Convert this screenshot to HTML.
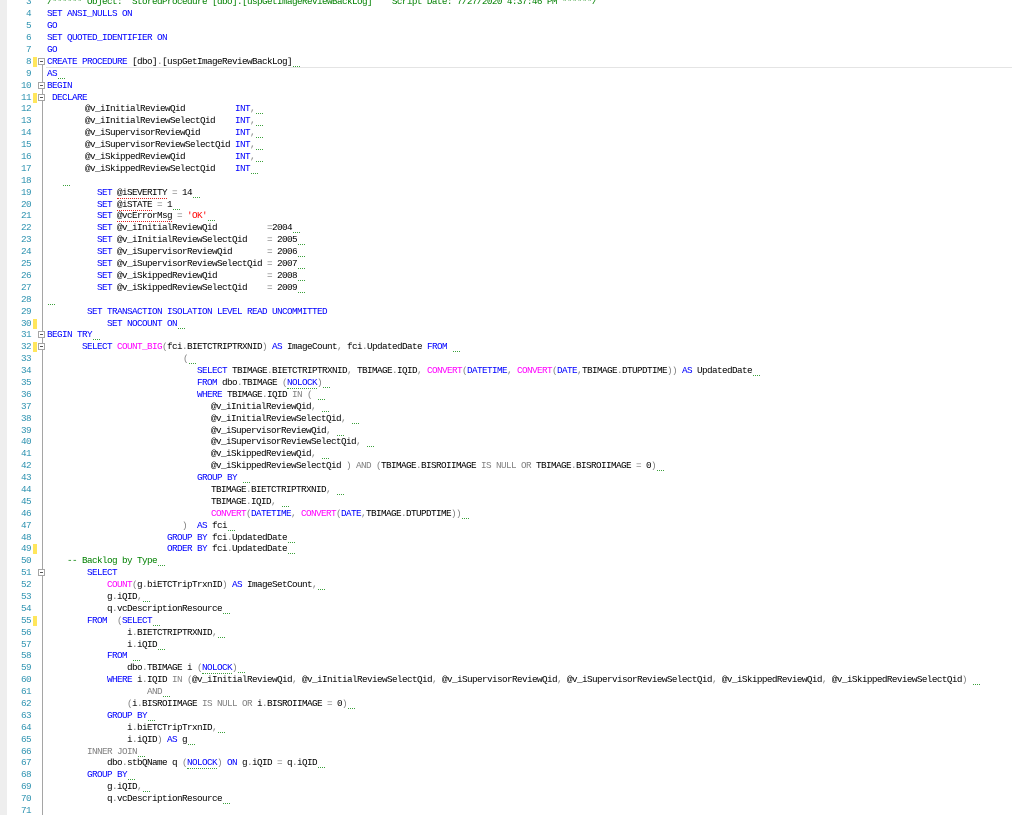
<!DOCTYPE html>
<html><head><meta charset="utf-8"><style>
html,body{margin:0;padding:0;background:#fff;width:1012px;height:815px;overflow:hidden;}
body{position:relative;font-family:"Liberation Mono",monospace;font-size:9.3px;}
#strip{position:absolute;left:0;top:0;width:7px;height:815px;background:#eeeeee;}
#fold{position:absolute;left:42px;top:60px;width:1px;height:755px;background:#a5a5a5;}
#code{position:absolute;left:0;top:-3.55px;width:1012px;}
.l{position:relative;height:11.9px;line-height:11.9px;white-space:pre;letter-spacing:-0.58px;}
.n{position:absolute;left:0;width:31px;text-align:right;color:#2b91af;}
.t{position:absolute;top:0;color:#000;}
.y{position:absolute;left:33px;top:1px;width:4px;height:10px;background:#ffe65c;}
.b{position:absolute;left:38px;top:2px;width:7px;height:7px;border:1px solid #a5a5a5;background:#fff;box-sizing:border-box;}
.b:after{content:"";position:absolute;left:1px;top:2px;width:3px;height:1px;background:#555;}
.k{color:#0000ff}.f{color:#ff00ff}.g{color:#808080}.s{color:#ff0000}.c{color:#008000}
.w{display:inline-block;width:7px;height:1px;margin-left:1px;border-bottom:1px dotted #3aa03a;vertical-align:-3px;}
.k.w2,.w2{border-bottom:1px dotted #3aa03a;}
.r{border-bottom:1px dotted #e02020;}
.hl{position:absolute;left:46px;top:-1px;width:966px;height:0;border-top:1px solid #e4e4e4;}
</style></head><body>
<div id="strip"></div>
<div id="fold"></div>
<div id="code">
<div class="l"><span class="n">3</span><span class="t c" style="left:47px">/****** Object:  StoredProcedure [dbo].[uspGetImageReviewBackLog]    Script Date: 7/27/2020 4:37:46 PM ******/</span></div>
<div class="l"><span class="n">4</span><span class="t k" style="left:47px">SET ANSI_NULLS ON</span></div>
<div class="l"><span class="n">5</span><span class="t k" style="left:47px">GO</span></div>
<div class="l"><span class="n">6</span><span class="t k" style="left:47px">SET QUOTED_IDENTIFIER ON</span></div>
<div class="l"><span class="n">7</span><span class="t k" style="left:47px">GO</span></div>
<div class="l"><span class="n">8</span><span class="y"></span><span class="b"></span><span class="t" style="left:47px"><span class="k">CREATE PROCEDURE</span> <span class="r">[dbo]</span><span class="g">.</span><span class="r">[uspGetImageReviewBackLog]</span><span class="w"></span></span></div>
<div class="l"><span class="n">9</span><span class="hl"></span><span class="t" style="left:47px"><span class="k">AS</span><span class="w"></span></span></div>
<div class="l"><span class="n">10</span><span class="b"></span><span class="t k" style="left:47px">BEGIN</span></div>
<div class="l"><span class="n">11</span><span class="y"></span><span class="b"></span><span class="t k" style="left:52px">DECLARE</span></div>
<div class="l"><span class="n">12</span><span class="t" style="left:85px">@v_iInitialReviewQid          <span class="k">INT</span><span class="g">,</span><span class="w"></span></span></div>
<div class="l"><span class="n">13</span><span class="t" style="left:85px">@v_iInitialReviewSelectQid    <span class="k">INT</span><span class="g">,</span><span class="w"></span></span></div>
<div class="l"><span class="n">14</span><span class="t" style="left:85px">@v_iSupervisorReviewQid       <span class="k">INT</span><span class="g">,</span><span class="w"></span></span></div>
<div class="l"><span class="n">15</span><span class="t" style="left:85px">@v_iSupervisorReviewSelectQid <span class="k">INT</span><span class="g">,</span><span class="w"></span></span></div>
<div class="l"><span class="n">16</span><span class="t" style="left:85px">@v_iSkippedReviewQid          <span class="k">INT</span><span class="g">,</span><span class="w"></span></span></div>
<div class="l"><span class="n">17</span><span class="t" style="left:85px">@v_iSkippedReviewSelectQid    <span class="k">INT</span><span class="w"></span></span></div>
<div class="l"><span class="n">18</span><span class="t" style="left:62px"><span class="w"></span></span></div>
<div class="l"><span class="n">19</span><span class="t" style="left:97px"><span class="k">SET</span> <span class="r">@iSEVERITY</span> <span class="g">=</span> 14<span class="w"></span></span></div>
<div class="l"><span class="n">20</span><span class="t" style="left:97px"><span class="k">SET</span> <span class="r">@iSTATE</span> <span class="g">=</span> 1<span class="w"></span></span></div>
<div class="l"><span class="n">21</span><span class="t" style="left:97px"><span class="k">SET</span> <span class="r">@vcErrorMsg</span> <span class="g">=</span> <span class="s">'OK'</span><span class="w"></span></span></div>
<div class="l"><span class="n">22</span><span class="t" style="left:97px"><span class="k">SET</span> @v_iInitialReviewQid          <span class="g">=</span>2004<span class="w"></span></span></div>
<div class="l"><span class="n">23</span><span class="t" style="left:97px"><span class="k">SET</span> @v_iInitialReviewSelectQid    <span class="g">=</span> 2005<span class="w"></span></span></div>
<div class="l"><span class="n">24</span><span class="t" style="left:97px"><span class="k">SET</span> @v_iSupervisorReviewQid       <span class="g">=</span> 2006<span class="w"></span></span></div>
<div class="l"><span class="n">25</span><span class="t" style="left:97px"><span class="k">SET</span> @v_iSupervisorReviewSelectQid <span class="g">=</span> 2007<span class="w"></span></span></div>
<div class="l"><span class="n">26</span><span class="t" style="left:97px"><span class="k">SET</span> @v_iSkippedReviewQid          <span class="g">=</span> 2008<span class="w"></span></span></div>
<div class="l"><span class="n">27</span><span class="t" style="left:97px"><span class="k">SET</span> @v_iSkippedReviewSelectQid    <span class="g">=</span> 2009<span class="w"></span></span></div>
<div class="l"><span class="n">28</span><span class="t" style="left:47px"><span class="w"></span></span></div>
<div class="l"><span class="n">29</span><span class="t k" style="left:87px">SET TRANSACTION ISOLATION LEVEL READ UNCOMMITTED</span></div>
<div class="l"><span class="n">30</span><span class="y"></span><span class="t" style="left:107px"><span class="k">SET NOCOUNT ON</span><span class="w"></span></span></div>
<div class="l"><span class="n">31</span><span class="b"></span><span class="t" style="left:47px"><span class="k">BEGIN TRY</span><span class="w"></span></span></div>
<div class="l"><span class="n">32</span><span class="y"></span><span class="b"></span><span class="t" style="left:82px"><span class="k">SELECT</span> <span class="f">COUNT_BIG</span><span class="g">(</span>fci<span class="g">.</span>BIETCTRIPTRXNID<span class="g">)</span> <span class="k">AS</span> ImageCount<span class="g">,</span> fci<span class="g">.</span>UpdatedDate <span class="k">FROM</span> <span class="w"></span></span></div>
<div class="l"><span class="n">33</span><span class="t" style="left:183px"><span class="g">(</span><span class="w"></span></span></div>
<div class="l"><span class="n">34</span><span class="t" style="left:197px"><span class="k">SELECT</span> TBIMAGE<span class="g">.</span>BIETCTRIPTRXNID<span class="g">,</span> TBIMAGE<span class="g">.</span>IQID<span class="g">,</span> <span class="f">CONVERT</span><span class="g">(</span><span class="k">DATETIME</span><span class="g">,</span> <span class="f">CONVERT</span><span class="g">(</span><span class="k">DATE</span><span class="g">,</span>TBIMAGE<span class="g">.</span>DTUPDTIME<span class="g">))</span> <span class="k">AS</span> UpdatedDate<span class="w"></span></span></div>
<div class="l"><span class="n">35</span><span class="t" style="left:197px"><span class="k">FROM</span> dbo<span class="g">.</span>TBIMAGE <span class="g">(</span><span class="k w2">NOLOCK</span><span class="g">)</span><span class="w"></span></span></div>
<div class="l"><span class="n">36</span><span class="t" style="left:197px"><span class="k">WHERE</span> TBIMAGE<span class="g">.</span>IQID <span class="g">IN (</span> <span class="w"></span></span></div>
<div class="l"><span class="n">37</span><span class="t" style="left:211px">@v_iInitialReviewQid<span class="g">,</span> <span class="w"></span></span></div>
<div class="l"><span class="n">38</span><span class="t" style="left:211px">@v_iInitialReviewSelectQid<span class="g">,</span> <span class="w"></span></span></div>
<div class="l"><span class="n">39</span><span class="t" style="left:211px">@v_iSupervisorReviewQid<span class="g">,</span> <span class="w"></span></span></div>
<div class="l"><span class="n">40</span><span class="t" style="left:211px">@v_iSupervisorReviewSelectQid<span class="g">,</span> <span class="w"></span></span></div>
<div class="l"><span class="n">41</span><span class="t" style="left:211px">@v_iSkippedReviewQid<span class="g">,</span> <span class="w"></span></span></div>
<div class="l"><span class="n">42</span><span class="t" style="left:211px">@v_iSkippedReviewSelectQid <span class="g">) AND (</span>TBIMAGE<span class="g">.</span>BISROIIMAGE <span class="g">IS NULL OR</span> TBIMAGE<span class="g">.</span>BISROIIMAGE <span class="g">=</span> 0<span class="g">)</span><span class="w"></span></span></div>
<div class="l"><span class="n">43</span><span class="t" style="left:197px"><span class="k">GROUP BY</span> <span class="w"></span></span></div>
<div class="l"><span class="n">44</span><span class="t" style="left:211px">TBIMAGE<span class="g">.</span>BIETCTRIPTRXNID<span class="g">,</span> <span class="w"></span></span></div>
<div class="l"><span class="n">45</span><span class="t" style="left:211px">TBIMAGE<span class="g">.</span>IQID<span class="g">,</span> <span class="w"></span></span></div>
<div class="l"><span class="n">46</span><span class="t" style="left:211px"><span class="f">CONVERT</span><span class="g">(</span><span class="k">DATETIME</span><span class="g">,</span> <span class="f">CONVERT</span><span class="g">(</span><span class="k">DATE</span><span class="g">,</span>TBIMAGE<span class="g">.</span>DTUPDTIME<span class="g">))</span><span class="w"></span></span></div>
<div class="l"><span class="n">47</span><span class="t" style="left:182px"><span class="g">)</span>  <span class="k">AS</span> fci<span class="w"></span></span></div>
<div class="l"><span class="n">48</span><span class="t" style="left:167px"><span class="k">GROUP BY</span> fci<span class="g">.</span>UpdatedDate<span class="w"></span></span></div>
<div class="l"><span class="n">49</span><span class="y"></span><span class="t" style="left:167px"><span class="k">ORDER BY</span> fci<span class="g">.</span>UpdatedDate<span class="w"></span></span></div>
<div class="l"><span class="n">50</span><span class="t" style="left:67px"><span class="c">-- Backlog by Type</span><span class="w"></span></span></div>
<div class="l"><span class="n">51</span><span class="b"></span><span class="t" style="left:87px"><span class="k">SELECT</span></span></div>
<div class="l"><span class="n">52</span><span class="t" style="left:107px"><span class="f">COUNT</span><span class="g">(</span>g<span class="g">.</span>biETCTripTrxnID<span class="g">)</span> <span class="k">AS</span> ImageSetCount<span class="g">,</span><span class="w"></span></span></div>
<div class="l"><span class="n">53</span><span class="t" style="left:107px">g<span class="g">.</span>iQID<span class="g">,</span><span class="w"></span></span></div>
<div class="l"><span class="n">54</span><span class="t" style="left:107px">q<span class="g">.</span>vcDescriptionResource<span class="w"></span></span></div>
<div class="l"><span class="n">55</span><span class="y"></span><span class="t" style="left:87px"><span class="k">FROM</span>  <span class="g">(</span><span class="k">SELECT</span><span class="w"></span></span></div>
<div class="l"><span class="n">56</span><span class="t" style="left:127px">i<span class="g">.</span>BIETCTRIPTRXNID<span class="g">,</span><span class="w"></span></span></div>
<div class="l"><span class="n">57</span><span class="t" style="left:127px">i<span class="g">.</span>iQID<span class="w"></span></span></div>
<div class="l"><span class="n">58</span><span class="t" style="left:107px"><span class="k">FROM</span> <span class="w"></span></span></div>
<div class="l"><span class="n">59</span><span class="t" style="left:127px">dbo<span class="g">.</span>TBIMAGE i <span class="g">(</span><span class="k w2">NOLOCK</span><span class="g">)</span><span class="w"></span></span></div>
<div class="l"><span class="n">60</span><span class="t" style="left:107px"><span class="k">WHERE</span> i<span class="g">.</span>IQID <span class="g">IN (</span>@v_iInitialReviewQid<span class="g">,</span> @v_iInitialReviewSelectQid<span class="g">,</span> @v_iSupervisorReviewQid<span class="g">,</span> @v_iSupervisorReviewSelectQid<span class="g">,</span> @v_iSkippedReviewQid<span class="g">,</span> @v_iSkippedReviewSelectQid<span class="g">)</span> <span class="w"></span></span></div>
<div class="l"><span class="n">61</span><span class="t" style="left:147px"><span class="g">AND</span><span class="w"></span></span></div>
<div class="l"><span class="n">62</span><span class="t" style="left:127px"><span class="g">(</span>i<span class="g">.</span>BISROIIMAGE <span class="g">IS NULL OR</span> i<span class="g">.</span>BISROIIMAGE <span class="g">=</span> 0<span class="g">)</span><span class="w"></span></span></div>
<div class="l"><span class="n">63</span><span class="t" style="left:107px"><span class="k">GROUP BY</span><span class="w"></span></span></div>
<div class="l"><span class="n">64</span><span class="t" style="left:127px">i<span class="g">.</span>biETCTripTrxnID<span class="g">,</span><span class="w"></span></span></div>
<div class="l"><span class="n">65</span><span class="t" style="left:127px">i<span class="g">.</span>iQID<span class="g">)</span> <span class="k">AS</span> g<span class="w"></span></span></div>
<div class="l"><span class="n">66</span><span class="t" style="left:87px"><span class="g">INNER JOIN</span><span class="w"></span></span></div>
<div class="l"><span class="n">67</span><span class="t" style="left:107px">dbo<span class="g">.</span>stbQName q <span class="g">(</span><span class="k w2">NOLOCK</span><span class="g">)</span> <span class="k">ON</span> g<span class="g">.</span>iQID <span class="g">=</span> q<span class="g">.</span>iQID<span class="w"></span></span></div>
<div class="l"><span class="n">68</span><span class="t" style="left:87px"><span class="k">GROUP BY</span><span class="w"></span></span></div>
<div class="l"><span class="n">69</span><span class="t" style="left:107px">g<span class="g">.</span>iQID<span class="g">,</span><span class="w"></span></span></div>
<div class="l"><span class="n">70</span><span class="t" style="left:107px">q<span class="g">.</span>vcDescriptionResource<span class="w"></span></span></div>
<div class="l"><span class="n">71</span></div>
</div>
</body></html>
